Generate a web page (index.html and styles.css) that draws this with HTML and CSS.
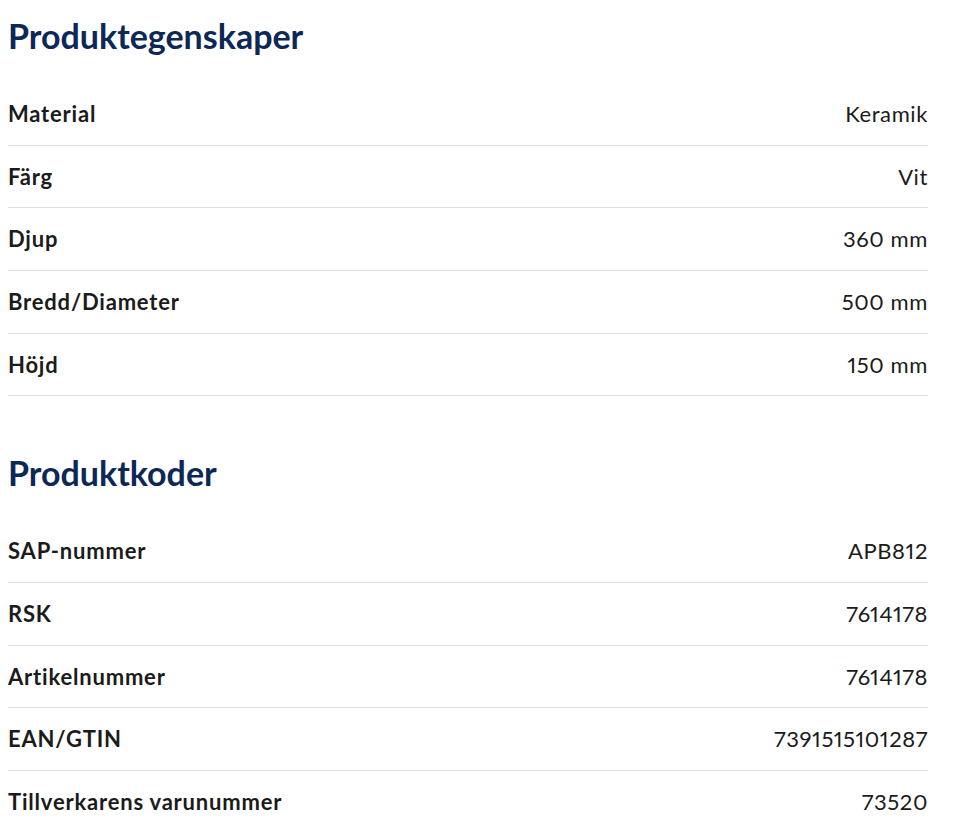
FILE: index.html
```html
<!DOCTYPE html>
<html lang="sv">
<head>
<meta charset="utf-8">
<title>Produktegenskaper</title>
<link rel="stylesheet" href="styles.css">
</head>
<body>
<main class="page">
  <section class="specs">
    <h2 class="specs-title">Produktegenskaper</h2>
    <dl class="specs-list">
      <div class="specs-row"><dt>Material</dt><dd>Keramik</dd></div>
      <div class="specs-row"><dt>Färg</dt><dd>Vit</dd></div>
      <div class="specs-row"><dt>Djup</dt><dd>360 mm</dd></div>
      <div class="specs-row"><dt>Bredd/Diameter</dt><dd>500 mm</dd></div>
      <div class="specs-row"><dt>Höjd</dt><dd>150 mm</dd></div>
    </dl>
  </section>
  <section class="specs">
    <h2 class="specs-title">Produktkoder</h2>
    <dl class="specs-list">
      <div class="specs-row"><dt>SAP-nummer</dt><dd>APB812</dd></div>
      <div class="specs-row"><dt>RSK</dt><dd>7614178</dd></div>
      <div class="specs-row"><dt>Artikelnummer</dt><dd>7614178</dd></div>
      <div class="specs-row"><dt>EAN/GTIN</dt><dd>7391515101287</dd></div>
      <div class="specs-row specs-row-last"><dt>Tillverkarens varunummer</dt><dd>73520</dd></div>
    </dl>
  </section>
</main>
</body>
</html>
```

FILE: styles.css
```css
html, body {
  margin: 0;
  padding: 0;
  background: #ffffff;
}
body {
  font-family: Lato, "Noto Sans", sans-serif;
  color: #1b1b1b;
}
.page {
  width: 920px;
  padding: 16px 8px 0;
  display: flex;
  flex-direction: column;
  gap: 57px;
}
.specs-title {
  margin: 0 0 26px;
  font-size: 34px;
  line-height: 40.8px;
  font-weight: 700;
  color: #0c2857;
}
.specs-list {
  margin: 0;
}
.specs-row {
  display: flex;
  justify-content: space-between;
  align-items: center;
  padding: 20px 0;
  line-height: 21.7px;
  font-size: 22px;
  border-bottom: 1px solid #e2e2e2;
}
.specs-row dt {
  font-weight: 700;
  letter-spacing: 0.8px;
}
.specs-row dd {
  margin: 0;
  font-weight: 400;
  letter-spacing: 0.6px;
  font-variant-numeric: proportional-nums;
}
```
